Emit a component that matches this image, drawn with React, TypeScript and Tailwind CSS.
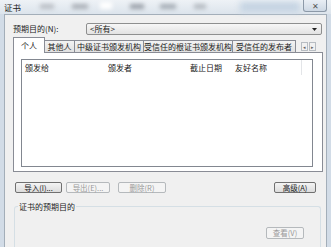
import React from "react";

const btn =
  "flex h-[11px] items-center justify-center rounded-[2px] border border-[#707070] bg-gradient-to-b from-[#f4f4f4] to-[#dcdcdc] text-[7.5px] leading-none text-[#222]";
const btnOff =
  "flex h-[11px] items-center justify-center rounded-[2px] border border-[#b5b9bc] bg-[#f4f4f4] text-[7.5px] leading-none text-[#9a9a9a]";

const tabs = [
  {label: "其他人", w: "w-[31px]"},
  {label: "中级证书颁发机构", w: "w-[70px]"},
  {label: "受信任的根证书颁发机构", w: "w-[90px]"},
  {label: "受信任的发布者", w: "w-[64px]"},
];

const columns = [
  {label: "颁发给", w: "w-[83px]"},
  {label: "颁发者", w: "w-[82px]"},
  {label: "截止日期", w: "w-[45px]"},
  {label: "友好名称", w: "w-[69px]"},
];

export default function App() {
  return (
    <div className="flex h-[247px] w-[331px] flex-col overflow-hidden bg-[#d2dce7] font-['Noto_Sans_CJK_SC',sans-serif] text-[8px] text-[#222]">
      {/* title bar */}
      <div className="relative h-[14px] shrink-0 bg-gradient-to-b from-[#eef2f6] to-[#dce4ec]">
        <span className="absolute left-[4px] top-[1px] text-[8.5px] leading-[12px] text-[#1a1a1a]">证书</span>
        <div className="absolute left-[40px] top-[4px] h-[5px] w-[14px] bg-[#b9bec4] blur-[2px]" />
        <div className="absolute left-[72px] top-[4px] h-[5px] w-[16px] bg-[#a9afb6] blur-[2px]" />
        <div className="absolute left-[100px] top-[2px] h-[7px] w-[12px] bg-[#ffffff] blur-[2px]" />
        <div className="absolute left-[130px] top-[4px] h-[5px] w-[14px] bg-[#9aa0a8] blur-[2px]" />
        <div className="absolute left-[160px] top-[4px] h-[5px] w-[16px] bg-[#a4acb4] blur-[2px]" />
        <div className="absolute left-[194px] top-[4px] h-[5px] w-[12px] bg-[#b3b9c0] blur-[2px]" />
        <div className="absolute left-[240px] top-[2px] h-[10px] w-[60px] bg-[#c4d3e2] blur-[3px]" />
        <div className="absolute right-[4px] top-0 flex h-[12px] w-[24px] items-center justify-center rounded-b-[3px] border border-t-0 border-[#8c99a8] bg-gradient-to-b from-[#e9eef4] to-[#cdd8e4] text-[8px] leading-none text-[#555]">
          ✕
        </div>
      </div>

      {/* client */}
      <div className="ml-[4px] mr-[4px] flex flex-1 flex-col border border-b-0 border-[#a3aeb9] bg-[#f0f0f0] pl-[8px] pr-[3px]">
        {/* purpose row */}
        <div className="mt-[8px] flex h-[12px] items-center">
          <span className="w-[73px] shrink-0 leading-none">预期目的(N):</span>
          <div className="mr-[1px] flex h-[12px] flex-1 items-center justify-between rounded-[2px] border border-[#8e8f8f] bg-gradient-to-b from-[#f7f7f7] to-[#e2e2e2] pl-[3px] pr-[4px]">
            <span className="leading-none">&lt;所有&gt;</span>
            <svg width="5" height="3" viewBox="0 0 5 3">
              <path d="M0 0h5L2.5 3z" fill="#222" />
            </svg>
          </div>
        </div>

        {/* tabs */}
        <div className="mt-[2px] flex h-[15px] items-end">
          <div className="relative z-10 -mb-px flex h-[16px] w-[32px] items-center justify-center border border-b-0 border-[#898c95] bg-white leading-none">
            个人
          </div>
          {tabs.map((t) => (
            <div
              key={t.label}
              className={`${t.w} -ml-px flex h-[12px] shrink-0 items-center justify-center border border-b-0 border-[#898c95] bg-gradient-to-b from-[#f3f3f3] to-[#e1e1e1] leading-none first:ml-0`}
            >
              {t.label}
            </div>
          ))}
          <div className="mb-[1px] ml-[5px] flex gap-px">
            <div className="flex h-[9px] w-[7px] items-center justify-center border border-[#b7bcc2] bg-[#f1f1f1] text-[5px] leading-none text-[#666]">◂</div>
            <div className="flex h-[9px] w-[7px] items-center justify-center border border-[#b7bcc2] bg-[#f1f1f1] text-[5px] leading-none text-[#666]">▸</div>
          </div>
        </div>

        {/* tab panel */}
        <div className="flex h-[120px] flex-col border border-[#898c95] bg-white pb-[4px] pl-[7px] pr-[9px] pt-[6px]">
          <div className="flex flex-1 flex-col border border-[#828790] bg-white">
            <div className="flex h-[15px] items-center">
              {columns.map((c) => (
                <div key={c.label} className={`${c.w} flex h-full items-center pl-[3px] leading-none`}>
                  {c.label}
                </div>
              ))}
              <div className="h-full border-l border-[#e3e5e8]" />
            </div>
          </div>
        </div>

        {/* buttons */}
        <div className="mt-[10px] flex h-[11px] items-center pl-[2px] pr-[7px]">
          <div className={`${btn} w-[47px]`}>导入(I)...</div>
          <div className={`${btnOff} ml-[4px] w-[44px]`}>导出(E)...</div>
          <div className={`${btnOff} ml-[8px] w-[48px]`}>删除(R)</div>
          <div className={`${btn} ml-auto w-[42px]`}>高级(A)</div>
        </div>

        {/* group box */}
        <div className="mt-[8px] flex flex-1 flex-col pl-[1px] pr-[2px]">
          <div className="relative flex flex-1 flex-col rounded-t-[3px] border border-b-0 border-[#d5dfe5] mt-[5px]">
            <span className="absolute -top-[6px] left-[3px] bg-[#f0f0f0] px-[1px] leading-[11px]">证书的预期目的</span>
            <div className="mt-[20px] flex justify-end pr-[16px]">
              <div className={`${btnOff} h-[12px] w-[38px]`}>查看(V)</div>
            </div>
          </div>
        </div>
      </div>
    </div>
  );
}
